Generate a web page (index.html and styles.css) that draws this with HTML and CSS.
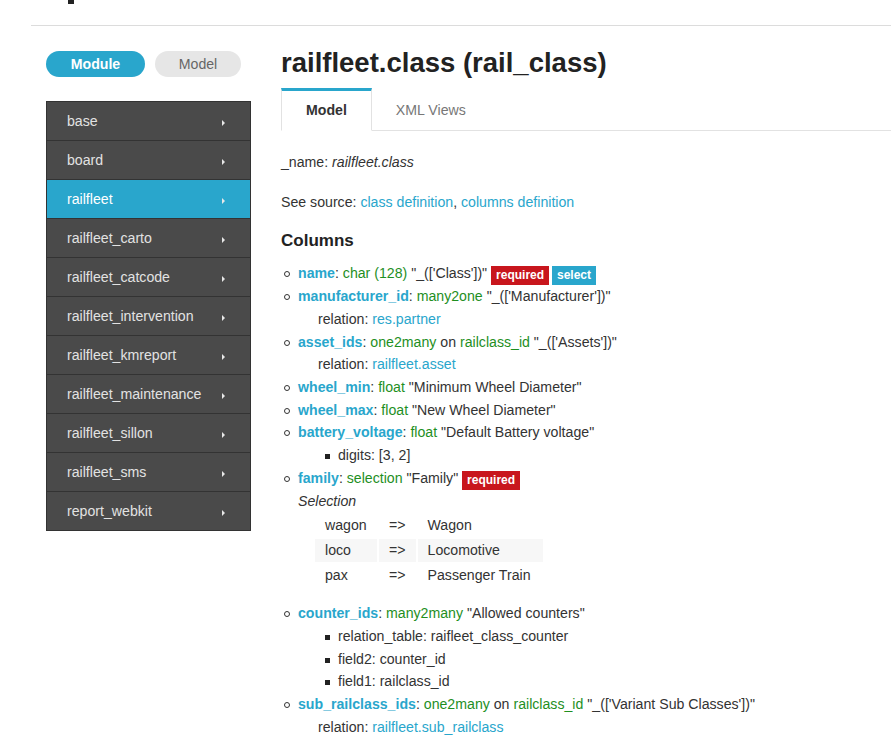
FILE: index.html
```html
<!DOCTYPE html>
<html>
<head>
<meta charset="utf-8">
<title>railfleet.class</title>
<link rel="stylesheet" href="styles.css">
</head>
<body>
<header class="topbar">
  <span class="topbar-mark"></span>
</header>
<div class="layout">
  <aside class="side">
    <div class="switch">
      <a class="pill pill-active">Module</a>
      <a class="pill">Model</a>
    </div>
    <ul class="modules">
      <li class="mod"><span>base</span><i class="caret"></i></li>
      <li class="mod"><span>board</span><i class="caret"></i></li>
      <li class="mod mod-active"><span>railfleet</span><i class="caret"></i></li>
      <li class="mod"><span>railfleet_carto</span><i class="caret"></i></li>
      <li class="mod"><span>railfleet_catcode</span><i class="caret"></i></li>
      <li class="mod"><span>railfleet_intervention</span><i class="caret"></i></li>
      <li class="mod"><span>railfleet_kmreport</span><i class="caret"></i></li>
      <li class="mod"><span>railfleet_maintenance</span><i class="caret"></i></li>
      <li class="mod"><span>railfleet_sillon</span><i class="caret"></i></li>
      <li class="mod"><span>railfleet_sms</span><i class="caret"></i></li>
      <li class="mod"><span>report_webkit</span><i class="caret"></i></li>
    </ul>
  </aside>
  <main class="main">
    <h1 class="title">railfleet.class (rail_class)</h1>
    <nav class="tabs">
      <a class="tab tab-active">Model</a>
      <a class="tab">XML Views</a>
    </nav>
    <section class="content">
      <p class="para">_name: <em>railfleet.class</em></p>
      <p class="para">See source: <a class="link">class definition</a>, <a class="link">columns definition</a></p>
      <h3 class="heading">Columns</h3>
      <ul class="fields">
        <li><a class="fname">name</a>: <span class="type">char (128)</span> "_(['Class'])" <span class="badge badge-req">required</span> <span class="badge badge-sel">select</span></li>
        <li><a class="fname">manufacturer_id</a>: <span class="type">many2one</span> "_(['Manufacturer'])"
          <div class="relation">relation: <a class="link">res.partner</a></div></li>
        <li><a class="fname">asset_ids</a>: <span class="type">one2many</span> on <span class="type">railclass_id</span> "_(['Assets'])"
          <div class="relation">relation: <a class="link">railfleet.asset</a></div></li>
        <li><a class="fname">wheel_min</a>: <span class="type">float</span> "Minimum Wheel Diameter"</li>
        <li><a class="fname">wheel_max</a>: <span class="type">float</span> "New Wheel Diameter"</li>
        <li><a class="fname">battery_voltage</a>: <span class="type">float</span> "Default Battery voltage"
          <ul class="attrs"><li>digits: [3, 2]</li></ul></li>
        <li><a class="fname">family</a>: <span class="type">selection</span> "Family" <span class="badge badge-req">required</span>
          <div class="sel-title">Selection</div>
          <table class="sel-table">
            <tr><td class="k">wagon</td><td class="arr">=&gt;</td><td class="v">Wagon</td></tr>
            <tr class="odd"><td class="k">loco</td><td class="arr">=&gt;</td><td class="v">Locomotive</td></tr>
            <tr><td class="k">pax</td><td class="arr">=&gt;</td><td class="v">Passenger Train</td></tr>
          </table></li>
        <li><a class="fname">counter_ids</a>: <span class="type">many2many</span> "Allowed counters"
          <ul class="attrs">
            <li>relation_table: raifleet_class_counter</li>
            <li>field2: counter_id</li>
            <li>field1: railclass_id</li>
          </ul></li>
        <li><a class="fname">sub_railclass_ids</a>: <span class="type">one2many</span> on <span class="type">railclass_id</span> "_(['Variant Sub Classes'])"
          <div class="relation">relation: <a class="link">railfleet.sub_railclass</a></div></li>
      </ul>
    </section>
  </main>
</div>
</body>
</html>
```
FILE: styles.css
```css
html, body {
  margin: 0;
  padding: 0;
  background: #fff;
}
body {
  font-family: "Liberation Sans", Arial, sans-serif;
  font-size: 14.15px;
  color: #333;
  overflow: hidden;
}
.topbar {
  height: 25px;
  margin-left: 31px;
  border-bottom: 1px solid #dcdcdc;
  display: flex;
  align-items: flex-start;
}
.topbar-mark {
  display: block;
  width: 6px;
  height: 4px;
  margin-left: 37px;
  background: #222;
}
.layout {
  display: flex;
  padding-left: 46px;
  padding-top: 25px;
  gap: 30px;
}
.side {
  width: 205px;
  flex: none;
}
.switch {
  display: flex;
  gap: 10px;
  margin-bottom: 24px;
}
.pill {
  display: block;
  height: 26px;
  line-height: 26px;
  border-radius: 13px;
  text-align: center;
  background: #e6e6e6;
  color: #666;
  width: 86px;
}
.pill-active {
  width: 99px;
  background: #29a6cc;
  color: #fff;
  font-weight: bold;
}
.modules {
  list-style: none;
  margin: 0;
  padding: 0;
  border: 1px solid #333;
  border-bottom: 0;
  background: #4a4a4a;
}
.mod {
  height: 38px;
  border-bottom: 1px solid #333;
  display: flex;
  align-items: center;
  justify-content: space-between;
  padding: 0 25px 0 20px;
  color: #e2e2e2;
}
.mod-active {
  background: #29a6cc;
  color: #fff;
}
.caret {
  display: block;
  width: 0;
  height: 0;
  border-top: 3px solid transparent;
  border-bottom: 3px solid transparent;
  border-left: 3px solid #e8e8e8;
  margin-top: 3px;
}
.main {
  flex: 1;
  min-width: 0;
}
.title {
  margin: -4px 0 0;
  font-size: 27.5px;
  line-height: 32px;
  font-weight: bold;
  color: #222;
}
.tabs {
  display: flex;
  margin-top: 9px;
  border-bottom: 1px solid #e2e2e2;
}
.tab {
  display: block;
  padding: 11px 25px;
  line-height: 17px;
  border-top: 3px solid transparent;
  border-left: 1px solid transparent;
  border-right: 1px solid transparent;
  margin-bottom: -1px;
  color: #777;
}
.tab-active {
  padding: 11px 24px;
  border-top-color: #29a6cc;
  border-left-color: #e2e2e2;
  border-right-color: #e2e2e2;
  border-bottom: 1px solid #fff;
  background: #fff;
  color: #333;
  font-weight: bold;
}
.tab + .tab {
  margin-left: -1px;
  padding-left: 24px;
}
.content {
  padding-top: 20px;
  line-height: 22.67px;
}
.para {
  margin: 0 0 17px;
}
.link {
  color: #29a6cc;
}
.heading {
  margin: 0 0 10px;
  font-size: 17px;
  line-height: 22px;
  font-weight: bold;
  color: #222;
}
.fields {
  list-style: none;
  margin: 0;
  padding-left: 17px;
}
.fields > li::before {
  content: "";
  display: inline-block;
  box-sizing: border-box;
  width: 6px;
  height: 6px;
  border: 1px solid #333;
  border-radius: 50%;
  margin-left: -14px;
  margin-right: 8px;
  vertical-align: 1px;
}
.fname {
  color: #29a6cc;
  font-weight: bold;
}
.type {
  color: #1f8f1f;
}
.badge {
  display: inline-block;
  font-size: 12px;
  line-height: 19px;
  font-weight: bold;
  color: #fff;
  padding: 0 5px;
  vertical-align: -1px;
}
.badge-req {
  background: #c8161d;
}
.badge-sel {
  background: #29a6cc;
  margin-left: -1px;
}
.relation {
  padding-left: 20px;
}
.attrs {
  list-style: none;
  margin: 0;
  padding-left: 40px;
}
.attrs > li::before {
  content: "";
  display: inline-block;
  width: 5px;
  height: 5px;
  background: #222;
  margin-left: -13px;
  margin-right: 8px;
  vertical-align: 1px;
}
.sel-title {
  font-style: italic;
}
.sel-table {
  margin: 0 0 13px 15px;
  border-spacing: 2px;
  line-height: 17px;
}
.sel-table td {
  padding: 3px 10px;
}
.sel-table td.k {
  width: 42px;
}
.sel-table td.arr {
  width: 16px;
}
.sel-table td.v {
  width: 105px;
}
.sel-table tr.odd td {
  background: #f7f7f7;
}
```
